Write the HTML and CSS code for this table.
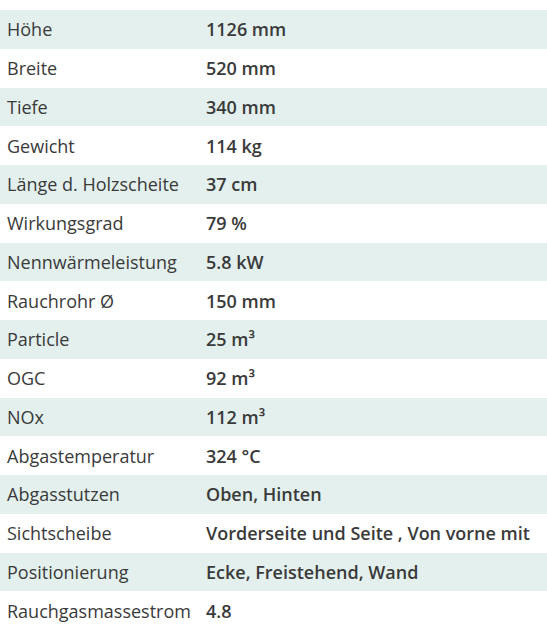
FILE: index.html
```html
<!DOCTYPE html>
<html lang="de">
<head>
<meta charset="utf-8">
<link rel="stylesheet" href="styles.css">
</head>
<body>
<table class="specs">
<tbody>
<tr><td class="k">Höhe</td><td class="v">1126 mm</td></tr>
<tr><td class="k">Breite</td><td class="v">520 mm</td></tr>
<tr><td class="k">Tiefe</td><td class="v">340 mm</td></tr>
<tr><td class="k">Gewicht</td><td class="v">114 kg</td></tr>
<tr><td class="k">Länge d. Holzscheite</td><td class="v">37 cm</td></tr>
<tr><td class="k">Wirkungsgrad</td><td class="v">79 %</td></tr>
<tr><td class="k">Nennwärmeleistung</td><td class="v">5.8 kW</td></tr>
<tr><td class="k">Rauchrohr Ø</td><td class="v">150 mm</td></tr>
<tr><td class="k">Particle</td><td class="v">25 m³</td></tr>
<tr><td class="k">OGC</td><td class="v">92 m³</td></tr>
<tr><td class="k">NOx</td><td class="v">112 m³</td></tr>
<tr><td class="k">Abgastemperatur</td><td class="v">324 °C</td></tr>
<tr><td class="k">Abgasstutzen</td><td class="v">Oben, Hinten</td></tr>
<tr><td class="k">Sichtscheibe</td><td class="v">Vorderseite und Seite , Von vorne mit</td></tr>
<tr><td class="k">Positionierung</td><td class="v">Ecke, Freistehend, Wand</td></tr>
<tr><td class="k">Rauchgasmassestrom</td><td class="v">4.8</td></tr>
</tbody>
</table>
</body>
</html>
```
FILE: styles.css
```css
html, body {
  margin: 0;
  padding: 0;
  background: #ffffff;
}
body {
  padding-top: 10px;
  font-family: "Open Sans", "Liberation Sans", sans-serif;
  font-size: 18px;
  color: #3a3a3a;
}
.specs {
  width: 547px;
  border-collapse: collapse;
  table-layout: fixed;
}
.specs tr {
  height: 38.75px;
}
.specs tr:nth-child(odd) {
  background: #e3f0ee;
}
.specs td {
  padding: 0;
  vertical-align: middle;
  white-space: nowrap;
  overflow: hidden;
  line-height: 22px;
}
.specs .k {
  width: 206px;
  padding-left: 7px;
  box-sizing: border-box;
}
.specs .v {
  font-weight: 600;
}
```
